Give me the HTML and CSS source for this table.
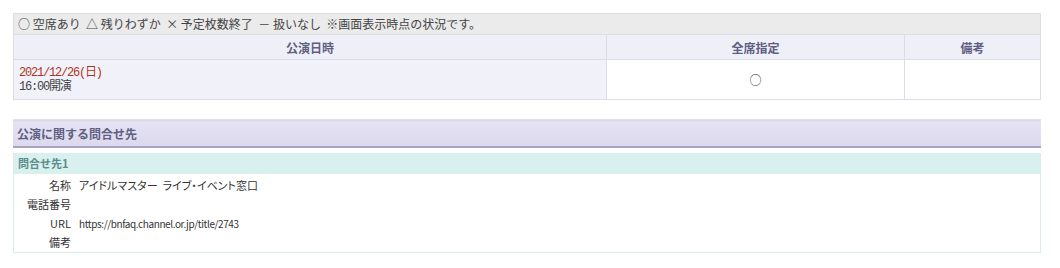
FILE: index.html
```html
<!DOCTYPE html>
<html lang="ja">
<head>
  <meta charset="UTF-8">
  <title>公演情報</title>
  <link rel="stylesheet" href="styles.css">
</head>
<body>

  <div class="wrap">
    <table class="status">
      <tr>
        <td class="legend" colspan="3">○ 空席あり&nbsp;&nbsp;△ 残りわずか&nbsp;&nbsp;× 予定枚数終了&nbsp;&nbsp;－ 扱いなし&nbsp;&nbsp;※画面表示時点の状況です。</td>
      </tr>
      <tr>
        <th class="col-date">公演日時</th>
        <th class="col-seat">全席指定</th>
        <th class="col-note">備考</th>
      </tr>
      <tr>
        <td class="date">
          <span class="day">2021/12/26(日)</span><br>
          <span class="time">16:00開演</span>
        </td>
        <td class="mark">○</td>
        <td></td>
      </tr>
    </table>

    <!-- 問合せ先 -->
    <div class="contact">
      <h2>公演に関する問合せ先</h2>
      <div class="contact-item">
        <div class="item-title">問合せ先1</div>
        <dl>
          <dt>名称</dt><dd>アイドルマスター&nbsp;&nbsp;ライブ・イベント窓口</dd>
          <dt>電話番号</dt><dd></dd>
          <dt>URL</dt><dd class="url">https://bnfaq.channel.or.jp/title/2743</dd>
          <dt>備考</dt><dd></dd>
        </dl>
      </div>
    </div>
  </div>

</body>
</html>
```

FILE: styles.css
```css
body {
  margin: 0;
  background: #fff;
  font-family: "Noto Sans CJK JP", sans-serif;
  font-size: 12px;
  color: #333;
}

.wrap {
  width: 1028px;
  margin: 13px 0 0 13px;
}

/* 公演日時テーブル */
.status {
  width: 100%;
  border-collapse: collapse;
  border: 1px solid #dcdce6;
}

.status td,
.status th {
  border: 1px solid #dcdce6;
  padding: 0;
}

.legend {
  height: 20px;
  background: #ebebeb;
  padding-left: 4px !important;
  font-size: 12px;
  line-height: 20px;
  color: #444;
}

.status th {
  height: 24px;
  background: #efeff8;
  font-size: 12px;
  font-weight: bold;
  color: #5e5e82;
}

.col-date { width: 592px; }
.col-seat { width: 297px; }

.date {
  height: 39px;
  background: #f1f1fa;
  padding-left: 5px !important;
  font-family: "Liberation Mono", "Noto Sans CJK JP", monospace;
  font-size: 12px;
  letter-spacing: -1.2px;
  line-height: 14px;
  color: #444;
}

.date .day {
  color: #b0341c;
}

.mark {
  text-align: center;
  font-size: 12px;
  color: #333;
}

/* 問合せ先 */
.contact {
  margin-top: 19px;
}

.contact h2 {
  margin: 0;
  height: 24px;
  padding-left: 4px;
  border-top: 3px double #e2e0ec;
  border-bottom: 2px solid #a8a4bf;
  background: linear-gradient(#e4e2f3, #dcd9ee);
  font-size: 12px;
  font-weight: bold;
  line-height: 24px;
  color: #5e5e80;
}

.contact-item {
  margin-top: 5px;
  border: 1px solid #d8ecea;
  border-top: none;
}

.item-title {
  height: 21px;
  background: #d8f0ee;
  padding-left: 4px;
  font-size: 11px;
  font-weight: bold;
  line-height: 21px;
  color: #5a8c8a;
}

.contact-item dl {
  display: grid;
  grid-template-columns: 57px 1fr;
  column-gap: 8px;
  margin: 0;
  padding: 2px 0 0;
  font-size: 11px;
  line-height: 19px;
  font-feature-settings: "palt";
}

.contact-item dt {
  text-align: right;
  color: #333;
}

.contact-item dd {
  margin: 0;
  min-height: 19px;
  color: #333;
}

.contact-item .url {
  font-size: 10px;
  letter-spacing: -0.4px;
}
```
